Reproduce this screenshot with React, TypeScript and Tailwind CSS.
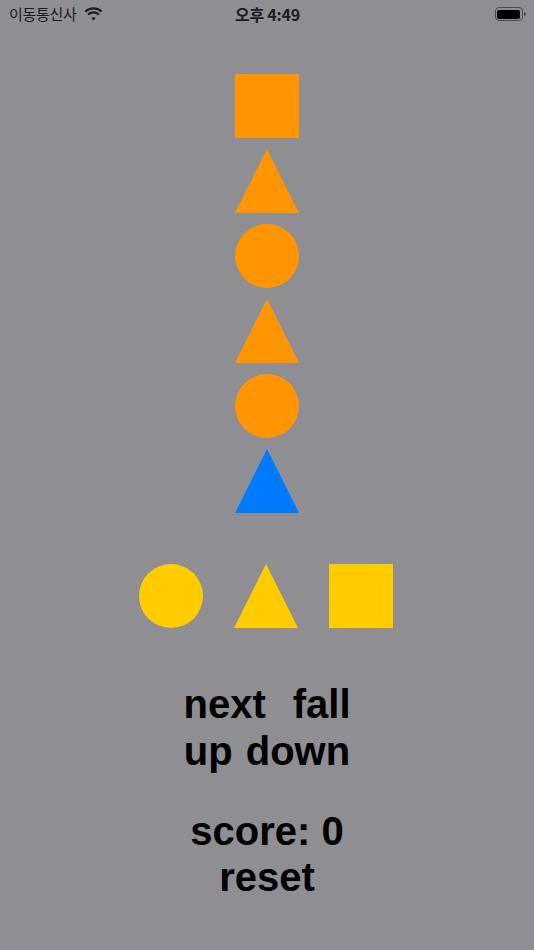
import React from "react";

type Shape = "square" | "triangle" | "circle";

function ShapeView({ kind, color }: { kind: Shape; color: string }) {
  if (kind === "square") return <div className="h-16 w-16" style={{ backgroundColor: color }} />;
  if (kind === "circle") return <div className="h-16 w-16 rounded-full" style={{ backgroundColor: color }} />;
  return (
    <svg width="64" height="64" viewBox="0 0 64 64" className="block">
      <polygon points="32,0 64,64 0,64" fill={color} />
    </svg>
  );
}

const ORANGE = "#ff9500";
const BLUE = "#007aff";
const YELLOW = "#ffcc00";

const stack: { kind: Shape; color: string }[] = [
  { kind: "square", color: ORANGE },
  { kind: "triangle", color: ORANGE },
  { kind: "circle", color: ORANGE },
  { kind: "triangle", color: ORANGE },
  { kind: "circle", color: ORANGE },
  { kind: "triangle", color: BLUE },
];

function StatusBar() {
  return (
    <div className="grid h-7 grid-cols-3 items-center pl-[9px] pr-[8px] text-[#1c1c1e]">
      <div className="flex items-center gap-[7px]">
        <span className="text-[15px] tracking-[-0.3px]" style={{ fontFamily: '"Noto Sans CJK KR", sans-serif' }}>
          이동통신사
        </span>
        <svg width="19" height="14" viewBox="0 0 18 14" className="mt-[-1px]">
          <path d="M9 2.6c2.8 0 5.4 1.1 7.3 2.9L17.9 3.8C15.6 1.6 12.4.2 9 .2S2.4 1.6.1 3.8l1.6 1.7C3.6 3.7 6.2 2.6 9 2.6z" fill="#1c1c1e" />
          <path d="M9 6.6c1.700 0 3.3.7 4.5 1.8l1.6-1.7C13.5 5.2 11.4 4.3 9 4.3S4.5 5.2 2.9 6.7l1.6 1.7C5.7 7.3 7.3 6.6 9 6.6z" fill="#1c1c1e" />
          <path d="M9 10.3c.9 0 1.6.3 2.2.8L9 13.6 6.8 11.1c.6-.5 1.3-.8 2.2-.8z" fill="#1c1c1e" />
        </svg>
      </div>
      <div
        className="text-center text-[16px] font-semibold tracking-[-0.2px]"
        style={{ fontFamily: '"Noto Sans CJK KR", sans-serif' }}
      >
        오후 4:49
      </div>
      <div className="flex items-center justify-end">
        <div className="flex h-[14px] w-[28px] items-center rounded-[4px] border border-[#4a4a4e] p-[1.5px]">
          <div className="h-full w-full rounded-[2px] bg-black" />
        </div>
        <div className="ml-[1px] h-[4px] w-[2px] rounded-r-sm bg-[#4a4a4e]" />
      </div>
    </div>
  );
}

export default function App() {
  return (
    <div className="h-[950px] w-full overflow-hidden bg-[#8e8e93]" style={{ fontFamily: '"Liberation Sans", Arial, sans-serif' }}>
      <StatusBar />
      <div className="mt-[46px] flex flex-col items-center gap-[11px]">
        {stack.map((s, i) => (
          <ShapeView key={i} kind={s.kind} color={s.color} />
        ))}
      </div>
      <div className="mt-[51px] flex justify-center gap-[31px] pr-[2px]">
        <ShapeView kind="circle" color={YELLOW} />
        <ShapeView kind="triangle" color={YELLOW} />
        <ShapeView kind="square" color={YELLOW} />
      </div>
      <div className="mt-[53px] flex flex-col items-center text-[40px] font-bold leading-[47px] text-black">
        <div className="flex gap-[27px]">
          <span>next</span>
          <span>fall</span>
        </div>
        <div className="flex gap-[13px]">
          <span>up</span>
          <span>down</span>
        </div>
      </div>
      <div className="mt-[33px] flex flex-col items-center text-[40px] font-bold leading-[46px] text-black">
        <span>score: 0</span>
        <span>reset</span>
      </div>
    </div>
  );
}
